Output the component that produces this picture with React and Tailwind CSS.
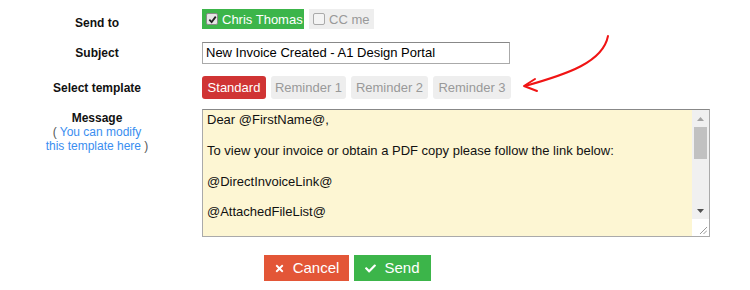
import React from "react";
import { FaTimes, FaCheck } from "react-icons/fa";

const font = { fontFamily: '"Liberation Sans", Arial, sans-serif' };

function Label({ children, className = "" }) {
  return (
    <div className={"w-[194px] shrink-0 text-center text-[12px] font-bold text-[#111] " + className}>
      {children}
    </div>
  );
}

export default function App() {
  return (
    <div className="relative w-[750px] h-[290px] bg-white overflow-hidden" style={font}>
      <div className="flex flex-col pt-[9px]">
        {/* Send to */}
        <div className="flex items-center gap-[8px] h-[20px]">
          <Label className="pt-[8px]">Send to</Label>
          <div className="flex items-center gap-[5px]">
            <div className="flex items-center h-[20px] w-[102px] bg-[#3cb54a] pl-[4px] gap-[4px]">
              <span className="flex items-center justify-center w-[12px] h-[12px] bg-[#e6e6e6] border border-[#8a8a8a] rounded-[2px]">
                <svg width="9" height="9" viewBox="0 0 10 10">
                  <path d="M1.5 5.2 L4 7.8 L8.6 1.8" stroke="#222" strokeWidth="2" fill="none" />
                </svg>
              </span>
              <span className="text-white text-[13px] leading-none">Chris Thomas</span>
            </div>
            <div className="flex items-center h-[20px] w-[65px] bg-[#eeeeee] pl-[4px] gap-[4px]">
              <span className="w-[12px] h-[12px] bg-[#f4f4f4] border border-[#aaa] rounded-[2px]" />
              <span className="text-[#999] text-[13px] leading-none">CC me</span>
            </div>
          </div>
        </div>

        {/* Subject */}
        <div className="flex items-center gap-[8px] mt-[13px] h-[22px]">
          <Label>Subject</Label>
          <div className="w-[308px] h-[22px] border border-[#aaa] border-t-[#888] flex items-center pl-[3px] text-[13px] text-black">
            New Invoice Created - A1 Design Portal
          </div>
        </div>

        {/* Select template */}
        <div className="flex items-center gap-[8px] mt-[12px] h-[23px]">
          <Label className="pt-[1px]">Select template</Label>
          <div className="flex items-center gap-[5px] text-[13px]">
            <div className="h-[23px] w-[64px] rounded-[3px] bg-[#d03434] text-white flex items-center justify-center">Standard</div>
            <div className="h-[23px] w-[75px] rounded-[3px] bg-[#eeeeee] text-[#999] flex items-center justify-center">Reminder 1</div>
            <div className="h-[23px] w-[77px] rounded-[3px] bg-[#eeeeee] text-[#999] flex items-center justify-center">Reminder 2</div>
            <div className="h-[23px] w-[78px] rounded-[3px] bg-[#eeeeee] text-[#999] flex items-center justify-center">Reminder 3</div>
          </div>
        </div>

        {/* Message */}
        <div className="flex items-start gap-[8px] mt-[10px]">
          <div className="w-[194px] shrink-0 text-center text-[12px] leading-[14px] pt-[2px]">
            <div className="font-bold text-[#111]">Message</div>
            <div className="text-[#3a8ef0]"><span className="text-[#555]">(</span> You can modify</div>
            <div className="text-[#3a8ef0]">this template here <span className="text-[#555]">)</span></div>
          </div>
          <div className="w-[508px] h-[128px] border border-[#aaa] border-t-[#888] bg-[#fdf6d3] flex">
            <div className="flex-1 overflow-hidden pl-[4px] pt-[2px] text-[13px] leading-[15.4px] text-[#111]">
              <p>Dear @FirstName@,</p>
              <p className="mt-[15.4px]">To view your invoice or obtain a PDF copy please follow the link below:</p>
              <p className="mt-[15.4px]">@DirectInvoiceLink@</p>
              <p className="mt-[15.4px]">@AttachedFileList@</p>
              <p className="mt-[15.4px]">Additional Invoice Details:</p>
            </div>
            <div className="w-[17px] flex flex-col bg-[#f0f0f0]">
              <div className="h-[17px] flex items-center justify-center">
                <svg width="7" height="4" viewBox="0 0 7 4"><path d="M0 4 L3.5 0 L7 4 Z" fill="#a3a3a3" /></svg>
              </div>
              <div className="mx-[2px] h-[32px] bg-[#c1c1c1]" />
              <div className="flex-1" />
              <div className="h-[17px] flex items-center justify-center">
                <svg width="7" height="4" viewBox="0 0 7 4"><path d="M0 0 L7 0 L3.5 4 Z" fill="#505050" /></svg>
              </div>
              <div className="h-[17px] bg-white flex items-end justify-end p-[2px]">
                <svg width="8" height="8" viewBox="0 0 8 8">
                  <path d="M1 8 L8 1 M4.5 8 L8 4.5" stroke="#999" strokeWidth="1" />
                </svg>
              </div>
            </div>
          </div>
        </div>

        {/* Buttons */}
        <div className="flex gap-[5px] mt-[18px] pl-[264px]">
          <div className="h-[26px] w-[85px] bg-[#e35637] text-white text-[15px] flex items-center justify-center gap-[8px]">
            <FaTimes size={11} />
            <span>Cancel</span>
          </div>
          <div className="h-[26px] w-[77px] bg-[#3cb54a] text-white text-[15px] flex items-center justify-center gap-[8px]">
            <FaCheck size={11} />
            <span>Send</span>
          </div>
        </div>
      </div>

      {/* Red arrow annotation */}
      <svg className="absolute left-0 top-0 pointer-events-none" width="750" height="290">
        <path d="M608 36 C 603 62, 568 74, 525 86" stroke="#f01414" strokeWidth="2" fill="none" strokeLinecap="round" />
        <path d="M535 79 L524 86 L537 91" stroke="#f01414" strokeWidth="2" fill="none" strokeLinecap="round" strokeLinejoin="round" />
      </svg>
    </div>
  );
}
